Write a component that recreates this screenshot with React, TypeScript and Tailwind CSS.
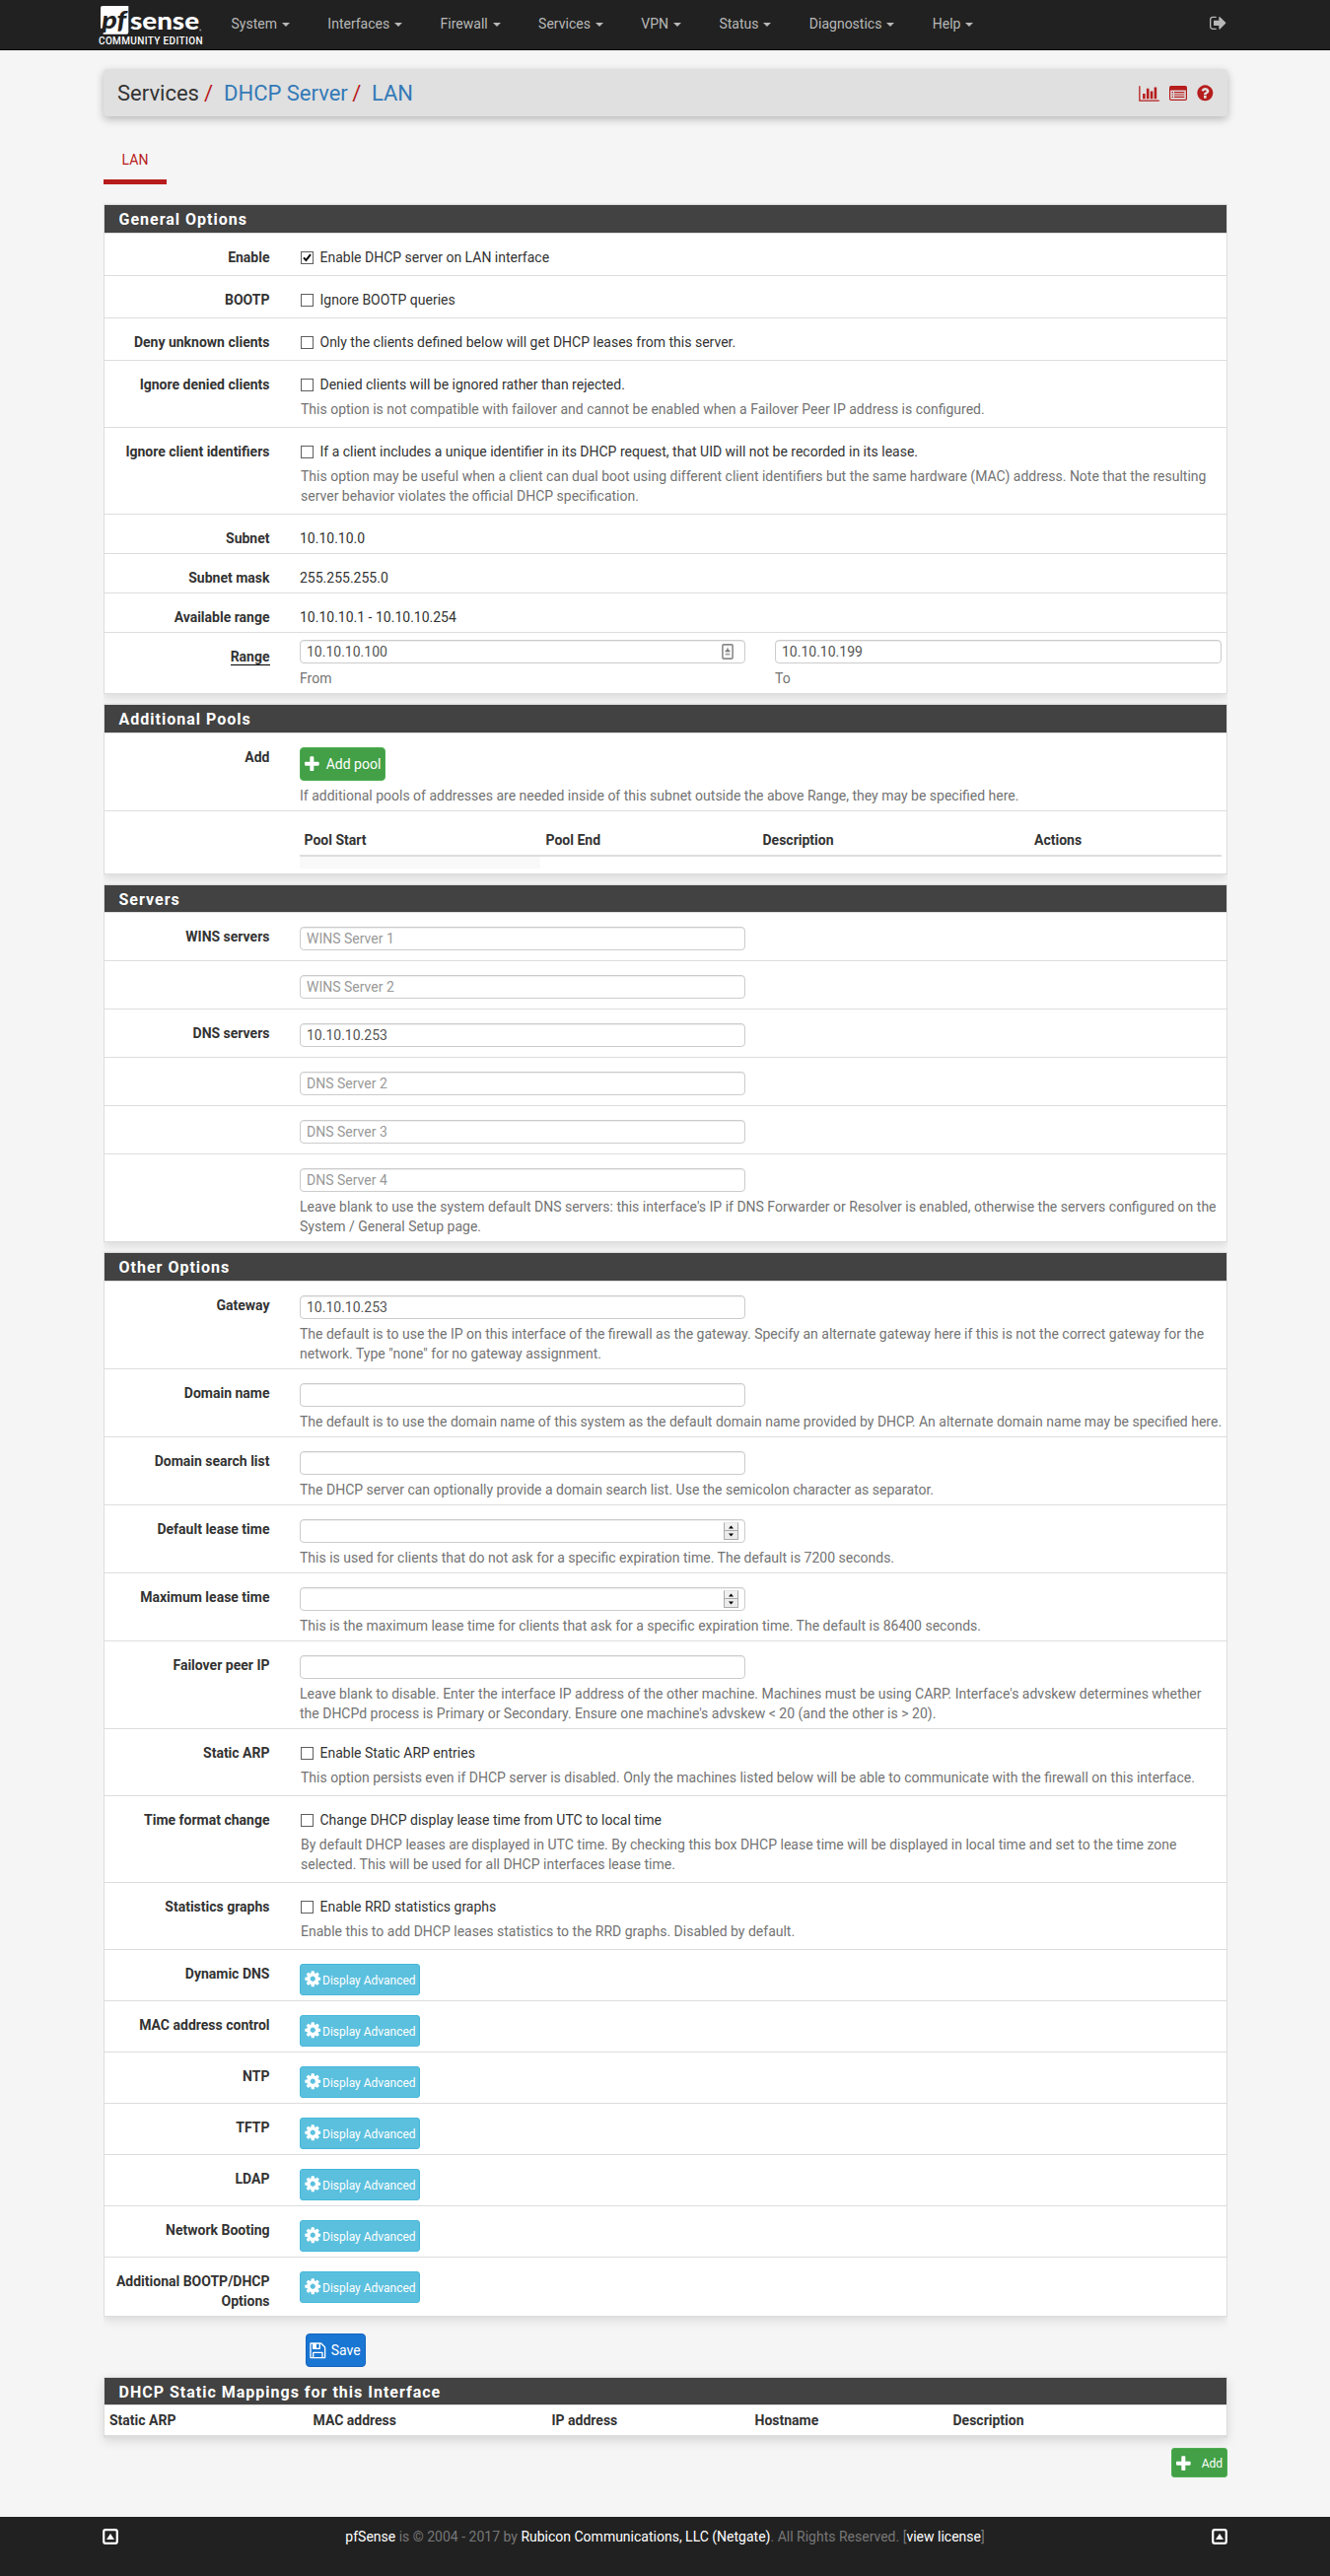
import React, { ReactNode } from "react";

const ICONS = {
  signOut:
    "M640 1440q0 4 1 20t.5 26.5-3 23.5-10 19.5-20.5 6.5h-320q-119 0-203.5-84.5t-84.5-203.5v-704q0-119 84.5-203.5t203.5-84.5h320q13 0 22.5 9.5t9.5 22.5q0 4 1 20t.5 26.5-3 23.5-10 19.5-20.5 6.5h-320q-66 0-113 47t-47 113v704q0 66 47 113t113 47h312l11.5 1 11.5 3 8 5.5 7 9 2 13.5zM1568 896q0 26-19 45l-544 544q-19 19-45 19t-45-19-19-45v-288h-448q-26 0-45-19t-19-45v-384q0-26 19-45t45-19h448v-288q0-26 19-45t45-19 45 19l544 544q19 19 19 45z",
  question:
    "M1024 1376v-192q0-14-9-23t-23-9h-192q-14 0-23 9t-9 23v192q0 14 9 23t23 9h192q14 0 23-9t9-23zM1280 704q0-88-55.5-163t-138.5-116-170-41q-243 0-371 213-15 24 8 42l132 100q7 6 19 6 16 0 25-12 53-68 86-92 34-24 86-24 48 0 85.5 26t37.5 59q0 38-20 61t-68 45q-63 28-115.5 86.5t-52.5 125.5v36q0 14 9 23t23 9h192q14 0 23-9t9-23q0-19 21.5-49.5t54.5-49.5q32-18 49-28.5t46-35 44.5-48 28-60.5 12.5-81zM1664 896q0 209-103 385.5t-279.5 279.5-385.5 103-385.5-103-279.5-279.5-103-385.5 103-385.5 279.5-279.5 385.5-103 385.5 103 279.5 279.5 103 385.5z",
  cog: "M1152 896q0-106-75-181t-181-75-181 75-75 181 75 181 181 75 181-75 75-181zM1664 787v222q0 12-8 23t-20 13l-185 28q-19 54-39 91 35 50 107 138 10 12 10 25t-9 23q-27 37-99 108t-94 71q-12 0-26-9l-138-108q-44 23-91 38-16 136-29 186-7 28-36 28h-222q-14 0-24.5-8.5t-11.5-21.5l-28-184q-49-16-90-37l-141 107q-10 9-25 9-14 0-25-11-126-114-165-168-7-10-7-23 0-12 8-23 15-21 51-66.5t54-70.5q-27-50-41-99l-183-27q-13-2-21-12.5t-8-23.5v-222q0-12 8-23t19-13l186-28q14-46 39-92-40-57-107-138-10-12-10-24 0-10 9-23 26-36 98.5-107.5t94.5-71.5q13 0 26 10l138 107q44-23 91-38 16-136 29-186 7-28 36-28h222q14 0 24.5 8.5t11.5 21.5l28 184q49 16 90 37l142-107q9-9 24-9 13 0 25 10 129 119 165 170 7 8 7 22 0 12-8 23-15 21-51 66.5t-54 70.5q26 50 41 98l183 28q13 2 21 12.5t8 23.5z",
  plus: "M1600 736v192q0 40-28 68t-68 28h-416v416q0 40-28 68t-68 28h-192q-40 0-68-28t-28-68v-416h-416q-40 0-68-28t-28-68v-192q0-40 28-68t68-28h416v-416q0-40 28-68t68-28h192q40 0 68 28t28 68v416h416q40 0 68 28t28 68z",
  floppy:
    "M512 1536h768v-384h-768v384zm896 0h128v-896q0-14-10-38.5t-20-34.5l-281-281q-10-10-34-20t-39-10v416q0 40-28 68t-68 28h-576q-40 0-68-28t-28-68v-416h-128v1280h128v-416q0-40 28-68t68-28h832q40 0 68 28t28 68v416zm-384-928v-320q0-13-9.5-22.5t-22.5-9.5h-192q-13 0-22.5 9.5t-9.5 22.5v320q0 13 9.5 22.5t22.5 9.5h192q13 0 22.5-9.5t9.5-22.5zm640 32v928q0 40-28 68t-68 28h-1344q-40 0-68-28t-28-68v-1344q0-40 28-68t68-28h928q40 0 88 20t76 48l280 280q28 28 48 76t20 88z",
};

const Icon = ({ d, className }: { d: string; className: string }) => (
  <svg viewBox="0 0 1792 1792" className={className} fill="currentColor">
    <path d={d} />
  </svg>
);

const Logo = () => (
  <svg width="106" height="46" viewBox="0 0 106 46" className="block">
    <path d="M2 8 q0 -2 2 -2 h26.3 v26.8 q0 2 -2 2 h-23.8 l1.4 -6 h-3.9z" fill="#fff" />
    <text x="3.2" y="29" fontSize="25" fontWeight="900" fontStyle="italic" fontFamily="Lato, sans-serif" fill="#212121" textLength="25" lengthAdjust="spacingAndGlyphs">
      pf
    </text>
    <text x="32" y="29.5" fontSize="24.5" fontWeight="900" fontFamily="Lato, sans-serif" fill="#fff" textLength="70" lengthAdjust="spacingAndGlyphs">
      sense
    </text>
    <circle cx="103.2" cy="30.5" r="1" fill="#888" />
    <text x="0" y="44.5" fontSize="10" fontWeight="500" fontFamily="Roboto, sans-serif" fill="#fff" textLength="105.5">
      COMMUNITY EDITION
    </text>
  </svg>
);

const MENU = ["System", "Interfaces", "Firewall", "Services", "VPN", "Status", "Diagnostics", "Help"];

const Row = ({ label, children, h, underline }: { label?: string; children?: ReactNode; h: string; underline?: boolean }) => (
  <div className={"flex gap-[30px] border-b border-[#dddddd] pr-[5px] last:border-b-0 " + h}>
    <div className="w-[168px] shrink-0 pr-[0.5px] pt-[14px] text-right font-bold">
      <span className={underline ? "border-b border-black" : ""}>{label}</span>
    </div>
    <div className="min-w-0 flex-1">{children}</div>
  </div>
);

const Help = ({ children }: { children: ReactNode }) => <p className="mt-[5px] text-[#737373]">{children}</p>;

const CheckRow = ({ label, text, h, help, checked }: { label: string; text: string; h: string; help?: ReactNode; checked?: boolean }) => (
  <Row label={label} h={h}>
    <div className="pl-px pt-[14px]">
      <div className="flex">
        <span className="mr-[6.5px] mt-[4px] flex h-[13px] w-[13px] items-center justify-center border border-[#5f5f5f] bg-white">
          {checked && (
            <svg width="9" height="9" viewBox="0 0 9 9">
              <path d="M1 4.4 L3.4 7 L8 1.2" fill="none" stroke="#000" strokeWidth="2" />
            </svg>
          )}
        </span>
        <span>{text}</span>
      </div>
      {help && <Help>{help}</Help>}
    </div>
  </Row>
);

const Input = ({ value, placeholder, className = "w-[452px]" }: { value?: string; placeholder?: string; className?: string }) => (
  <input
    defaultValue={value}
    placeholder={placeholder}
    className={"block h-[24px] rounded-[4px] border border-[#cccccc] bg-white px-[6px] text-[14px] text-[#555555] shadow-[inset_0_1px_1px_rgba(0,0,0,0.075)] placeholder:text-[#999999] " + className}
  />
);

const InputRow = ({ label, h, value, placeholder, help, spinner }: { label?: string; h: string; value?: string; placeholder?: string; help?: ReactNode; spinner?: boolean }) => (
  <Row label={label} h={h}>
    <div className="relative w-[452px] pt-[14px]">
      <Input value={value} placeholder={placeholder} />
      {spinner && (
        <svg width="15" height="18" viewBox="0 0 15 18" className="absolute right-[7px] top-[17px]">
          <rect x="0.5" y="0.5" width="14" height="8" fill="#f0f0f0" stroke="#acacac" />
          <rect x="0.5" y="8.5" width="14" height="9" fill="#ebebeb" stroke="#acacac" />
          <path d="M0.5 0.5h14" stroke="#e6e6e6" />
          <path d="M5 6.5h5l-2.5-3zM5 11.5h5l-2.5 3z" fill="#000" />
        </svg>
      )}
    </div>
    {help && <Help>{help}</Help>}
  </Row>
);

const AdvancedRow = ({ label, h = "h-[52px]" }: { label: string; h?: string }) => (
  <Row label={label} h={h}>
    <div className="pt-[14px]">
      <button className="flex h-[32px] w-[122px] rounded-[3px] border border-[#46b8da] bg-[#5bc0de] pl-[2.5px] text-[12px] text-white">
        <Icon d={ICONS.cog} className="mt-[5px] h-[18.5px] w-[18.5px] shrink-0" />
        <span className="ml-[1px] mt-[8px] whitespace-nowrap leading-[17px]">Display Advanced</span>
      </button>
    </div>
  </Row>
);

const Panel = ({ title, children, className = "", headH = "h-[29px]", open }: { title: string; children: ReactNode; className?: string; headH?: string; open?: boolean }) => (
  <section className={className + (open ? "" : " [clip-path:inset(-1px_0_-16px_0)]")}>
    <div className="border border-[#dddddd] bg-white shadow-[0_3px_10px_rgba(0,0,0,0.12)]">
      <h2 className={"border-b border-[#dddddd] bg-[#424242] pl-[14.5px] pt-[5px] text-[16px] font-bold leading-[19px] tracking-[1px] text-white " + headH}>{title}</h2>
      {children}
    </div>
  </section>
);

const UpBox = () => (
  <svg width="16" height="16" viewBox="0 0 16 16" className="block">
    <rect x="1.2" y="1.2" width="13.6" height="13.6" rx="1.8" fill="none" stroke="#fff" strokeWidth="2.2" />
    <path d="M4 11h8L8 5z" fill="#fff" />
  </svg>
);

export default function App() {
  return (
    <div className="h-[2613px] w-[1349px] overflow-hidden bg-[#f5f5f5] font-['Roboto',sans-serif] text-[14px] leading-[20px] text-[#333333]">
      <nav className="flex h-[51px] border-b border-black bg-[#212121] pl-[100px] text-[#b8b8b8]">
        <Logo />
        <ul className="ml-[28.5px] flex gap-[38.4px] pt-[14px]">
          {MENU.map((m) => (
            <li key={m} className="flex">
              {m}
              <span className="ml-[5px] mt-[9px] h-0 w-0 border-x-4 border-t-4 border-x-transparent border-t-[#b8b8b8]" />
            </li>
          ))}
        </ul>
        <Icon d={ICONS.signOut} className="ml-auto mr-[103px] mt-[14px] h-[18.67px] w-[18.67px]" />
      </nav>

      <main className="ml-[105px] w-[1140px]">
        <header className="mt-[19px] flex h-[48px] items-center rounded-[4px] bg-[#e0e0e0] pl-[14px] pr-[14px] pt-px text-[22px] shadow-[0_3px_9px_rgba(0,0,0,0.25)]">
          <span>Services</span>
          <span className="ml-[5px] mr-[11px] text-[#b71c1c]">/</span>
          <span className="text-[#337ab7]">DHCP Server</span>
          <span className="ml-[4.5px] mr-[10.5px] text-[#b71c1c]">/</span>
          <span className="text-[#337ab7]">LAN</span>
          <div className="ml-auto flex items-center text-[#b71c1c]">
            <svg width="21" height="18" viewBox="0 0 2048 1792" fill="currentColor">
              <path d="M640 896v512h-256v-512h256zM1024 384v1024h-256v-1024h256zM2048 1536v128h-2048v-1536h128v1408h1920zM1408 640v768h-256v-768h256zM1792 256v1152h-256v-1152h256z" />
            </svg>
            <svg width="18" height="15" viewBox="0 0 18 15" className="ml-[9.5px]">
              <rect x="0.6" y="0.6" width="16.8" height="13.8" rx="1.2" fill="none" stroke="currentColor" strokeWidth="1.2" />
              <path d="M1 1h16v3.6H1z" fill="currentColor" />
              <path d="M2.6 6.6h1.4M5 6.6h10.4M2.6 9h1.4M5 9h10.4M2.6 11.4h1.4M5 11.4h10.4" stroke="currentColor" strokeWidth="1.2" />
            </svg>
            <Icon d={ICONS.question} className="-mr-px ml-[9.5px] h-[18.67px] w-[18.67px]" />
          </div>
        </header>

        <div className="mt-[34px] flex h-[35px] w-[64px] justify-center border-b-[5px] border-[#b71c1c] text-[#b71c1c]">LAN</div>

        <Panel title="General Options" className="mt-[20px]">
          <CheckRow label="Enable" text="Enable DHCP server on LAN interface" h="h-[43px]" checked />
          <CheckRow label="BOOTP" text="Ignore BOOTP queries" h="h-[43px]" />
          <CheckRow label="Deny unknown clients" text="Only the clients defined below will get DHCP leases from this server." h="h-[43px]" />
          <CheckRow label="Ignore denied clients" text="Denied clients will be ignored rather than rejected." h="h-[68px]" help="This option is not compatible with failover and cannot be enabled when a Failover Peer IP address is configured." />
          <CheckRow
            label="Ignore client identifiers"
            text="If a client includes a unique identifier in its DHCP request, that UID will not be recorded in its lease."
            h="h-[88px]"
            help={<>This option may be useful when a client can dual boot using different client identifiers but the same hardware (MAC) address. Note that the resulting<br />server behavior violates the official DHCP specification.</>}
          />
          <Row label="Subnet" h="h-[40px]"><div className="pt-[14px]">10.10.10.0</div></Row>
          <Row label="Subnet mask" h="h-[40px]"><div className="pt-[14px]">255.255.255.0</div></Row>
          <Row label="Available range" h="h-[40px]"><div className="pt-[14px]">10.10.10.1 - 10.10.10.254</div></Row>
          <Row label="Range" h="h-[61px]" underline>
            <div className="flex gap-[30px] pt-[7px]">
              <div className="relative w-[452px]">
                <Input value="10.10.10.100" />
                <svg width="12" height="16" viewBox="0 0 12 16" className="absolute right-[12px] top-[4px]">
                  <rect x="0.9" y="0.9" width="10.2" height="14.2" rx="1" fill="#fff" stroke="#8a8a8a" strokeWidth="1.6" />
                  <path d="M6 3.2l1 3.4h1.4v1.6H3.6V6.6H5z" fill="#777" />
                  <path d="M3.6 9.6h4.8v2H3.6z" fill="#aaa" />
                </svg>
                <Help>From</Help>
              </div>
              <div className="flex-1">
                <Input value="10.10.10.199" className="w-full" />
                <Help>To</Help>
              </div>
            </div>
          </Row>
        </Panel>

        <Panel title="Additional Pools" className="mt-[10px]">
          <Row label="Add" h="h-[79px]">
            <div className="pt-[14px]">
              <button className="flex h-[34px] w-[87px] items-center rounded-[4px] border border-[#4caf50] bg-[#43a047] pl-[2px] text-white">
                <Icon d={ICONS.plus} className="h-[18.67px] w-[18.67px] shrink-0" />
                <span className="ml-[5px] whitespace-nowrap">Add pool</span>
              </button>
              <Help>If additional pools of addresses are needed inside of this subnet outside the above Range, they may be specified here.</Help>
            </div>
          </Row>
          <Row h="h-[63px]">
            <div className="flex h-[46px] border-b-2 border-[#dddddd] pt-[19px] font-bold">
              <span className="w-[245px] pl-[4.5px]">Pool Start</span>
              <span className="w-[220px] pl-[4.5px]">Pool End</span>
              <span className="w-[275px] pl-[4.5px]">Description</span>
              <span className="pl-[5px]">Actions</span>
            </div>
            <div className="h-[12px] w-[244px] bg-[#f9f9f9]" />
          </Row>
        </Panel>

        <Panel title="Servers" className="mt-[10px]" headH="h-[28px]">
          <InputRow label="WINS servers" placeholder="WINS Server 1" h="h-[49px]" />
          <InputRow placeholder="WINS Server 2" h="h-[49px]" />
          <InputRow label="DNS servers" value="10.10.10.253" h="h-[49px]" />
          <InputRow placeholder="DNS Server 2" h="h-[49px]" />
          <InputRow placeholder="DNS Server 3" h="h-[49px]" />
          <InputRow
            placeholder="DNS Server 4"
            h="h-[88px]"
            help={<>Leave blank to use the system default DNS servers: this interface's IP if DNS Forwarder or Resolver is enabled, otherwise the servers configured on the<br />System / General Setup page.</>}
          />
        </Panel>

        <Panel title="Other Options" className="mt-[10px]">
          <InputRow
            label="Gateway"
            value="10.10.10.253"
            h="h-[89px]"
            help={<>The default is to use the IP on this interface of the firewall as the gateway. Specify an alternate gateway here if this is not the correct gateway for the<br />network. Type "none" for no gateway assignment.</>}
          />
          <InputRow label="Domain name" h="h-[69px]" help={<span className="whitespace-nowrap">The default is to use the domain name of this system as the default domain name provided by DHCP. An alternate domain name may be specified here.</span>} />
          <InputRow label="Domain search list" h="h-[69px]" help="The DHCP server can optionally provide a domain search list. Use the semicolon character as separator." />
          <InputRow label="Default lease time" h="h-[69px]" spinner help="This is used for clients that do not ask for a specific expiration time. The default is 7200 seconds." />
          <InputRow label="Maximum lease time" h="h-[69px]" spinner help="This is the maximum lease time for clients that ask for a specific expiration time. The default is 86400 seconds." />
          <InputRow
            label="Failover peer IP"
            h="h-[89px]"
            help={<>Leave blank to disable. Enter the interface IP address of the other machine. Machines must be using CARP. Interface's advskew determines whether<br />the DHCPd process is Primary or Secondary. Ensure one machine's advskew &lt; 20 (and the other is &gt; 20).</>}
          />
          <CheckRow label="Static ARP" text="Enable Static ARP entries" h="h-[68px]" help="This option persists even if DHCP server is disabled. Only the machines listed below will be able to communicate with the firewall on this interface." />
          <CheckRow
            label="Time format change"
            text="Change DHCP display lease time from UTC to local time"
            h="h-[88px]"
            help={<>By default DHCP leases are displayed in UTC time. By checking this box DHCP lease time will be displayed in local time and set to the time zone<br />selected. This will be used for all DHCP interfaces lease time.</>}
          />
          <CheckRow label="Statistics graphs" text="Enable RRD statistics graphs" h="h-[68px]" help="Enable this to add DHCP leases statistics to the RRD graphs. Disabled by default." />
          <AdvancedRow label="Dynamic DNS" />
          <AdvancedRow label="MAC address control" />
          <AdvancedRow label="NTP" />
          <AdvancedRow label="TFTP" />
          <AdvancedRow label="LDAP" />
          <AdvancedRow label="Network Booting" />
          <AdvancedRow label="Additional BOOTP/DHCP Options" h="h-[59px]" />
        </Panel>

        <button className="ml-[205px] mt-[17px] flex h-[34px] w-[61px] items-center rounded-[4px] border border-[#1565c0] bg-[#1976d2] pl-[2px] text-white">
          <Icon d={ICONS.floppy} className="h-[18.67px] w-[18.67px] shrink-0" />
          <span className="ml-[4px]">Save</span>
        </button>

        <Panel title="DHCP Static Mappings for this Interface" className="mt-[10px]" headH="h-[28px]" open>
          <div className="flex h-[32px] border-b-2 border-[#dddddd] pl-[5px] pt-[5px] font-bold">
            <span className="w-[206.5px]">Static ARP</span>
            <span className="w-[242px]">MAC address</span>
            <span className="w-[206px]">IP address</span>
            <span className="w-[201px]">Hostname</span>
            <span>Description</span>
          </div>
        </Panel>

        <div className="mt-[10px] flex justify-end">
          <button className="flex h-[30px] w-[57px] items-center rounded-[3px] border border-[#4caf50] bg-[#43a047] pl-[2px] pt-[2px] text-[12px] text-white">
            <Icon d={ICONS.plus} className="h-[18.67px] w-[18.67px] shrink-0" />
            <span className="ml-[9px]">Add</span>
          </button>
        </div>
      </main>

      <footer className="mt-[40px] h-[60px] bg-[#212121] text-[#777777]">
        <div className="ml-[104px] flex w-[1141px] justify-between pt-[12px]">
          <UpBox />
          <p className="-mt-[2px] whitespace-nowrap">
            <span className="text-white">pfSense</span> is © 2004 - 2017 by <span className="text-white">Rubicon Communications, LLC (Netgate)</span>. All Rights Reserved. [<span className="text-white">view license</span>]
          </p>
          <UpBox />
        </div>
      </footer>
    </div>
  );
}
